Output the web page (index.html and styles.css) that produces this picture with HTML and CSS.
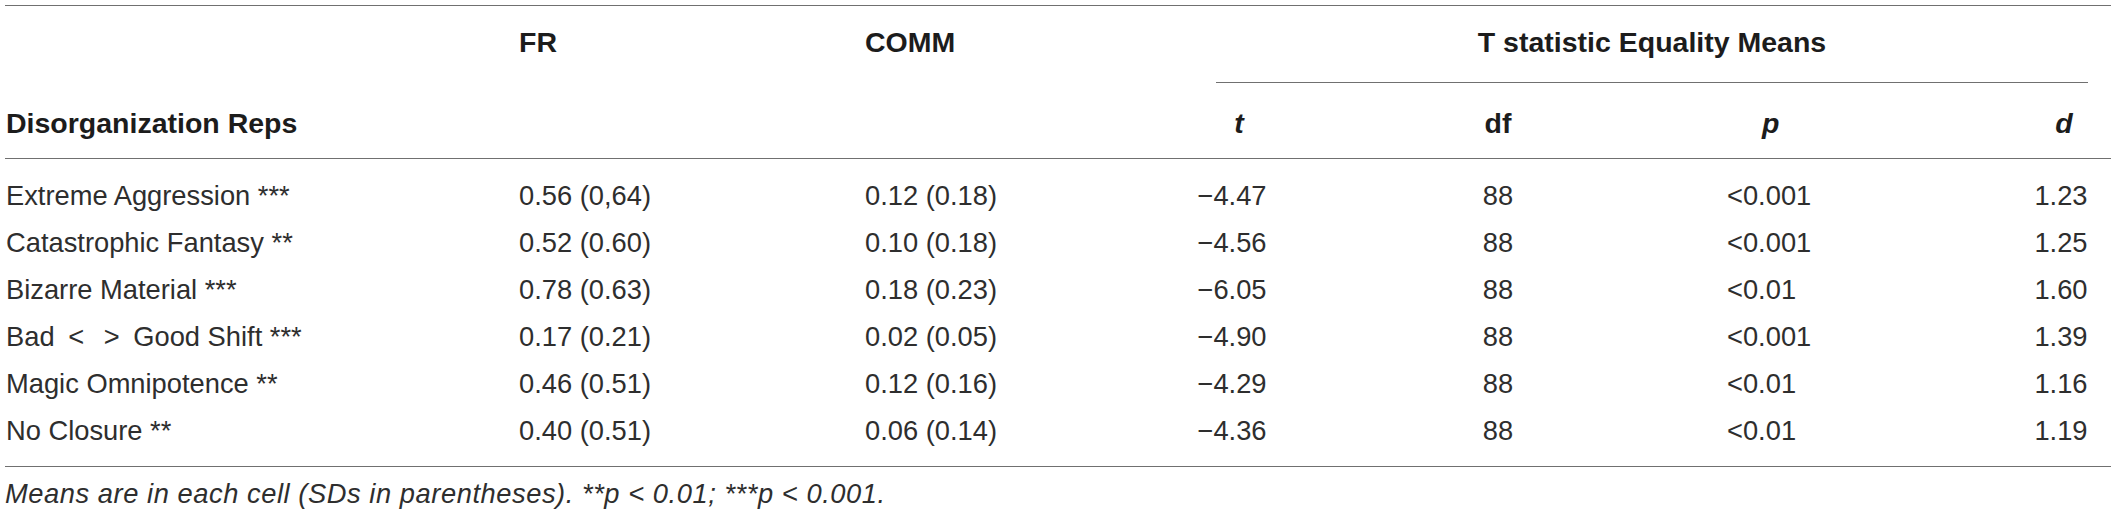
FILE: index.html
```html
<!DOCTYPE html>
<html lang="en">
<head>
<meta charset="utf-8">
<title>Disorganization Reps</title>
<link rel="stylesheet" href="styles.css">
</head>
<body>
<div class="table">
  <div class="head">
    <div class="row hrow1">
      <div class="cell c-label"></div>
      <div class="cell c-fr">FR</div>
      <div class="cell c-comm">COMM</div>
      <div class="cell group">T statistic Equality Means</div>
    </div>
    <div class="row hrow2">
      <div class="cell c-label">Disorganization Reps</div>
      <div class="cell c-fr"></div>
      <div class="cell c-comm"></div>
      <div class="cell c-t c-t-head"><i>t</i></div>
      <div class="cell c-df">df</div>
      <div class="cell c-p-head"><i>p</i></div>
      <div class="cell c-d c-d-head"><i>d</i></div>
    </div>
  </div>
  <div class="body">
    <div class="row drow">
      <div class="cell c-label">Extreme Aggression ***</div>
      <div class="cell c-fr">0.56 (0,64)</div>
      <div class="cell c-comm">0.12 (0.18)</div>
      <div class="cell c-t">−4.47</div>
      <div class="cell c-df">88</div>
      <div class="cell c-p">&lt;0.001</div>
      <div class="cell c-d">1.23</div>
    </div>
    <div class="row drow">
      <div class="cell c-label">Catastrophic Fantasy **</div>
      <div class="cell c-fr">0.52 (0.60)</div>
      <div class="cell c-comm">0.10 (0.18)</div>
      <div class="cell c-t">−4.56</div>
      <div class="cell c-df">88</div>
      <div class="cell c-p">&lt;0.001</div>
      <div class="cell c-d">1.25</div>
    </div>
    <div class="row drow">
      <div class="cell c-label">Bizarre Material ***</div>
      <div class="cell c-fr">0.78 (0.63)</div>
      <div class="cell c-comm">0.18 (0.23)</div>
      <div class="cell c-t">−6.05</div>
      <div class="cell c-df">88</div>
      <div class="cell c-p">&lt;0.01</div>
      <div class="cell c-d">1.60</div>
    </div>
    <div class="row drow">
      <div class="cell c-label">Bad <span class="op">&lt;</span> <span class="op">&gt;</span> Good Shift ***</div>
      <div class="cell c-fr">0.17 (0.21)</div>
      <div class="cell c-comm">0.02 (0.05)</div>
      <div class="cell c-t">−4.90</div>
      <div class="cell c-df">88</div>
      <div class="cell c-p">&lt;0.001</div>
      <div class="cell c-d">1.39</div>
    </div>
    <div class="row drow">
      <div class="cell c-label">Magic Omnipotence **</div>
      <div class="cell c-fr">0.46 (0.51)</div>
      <div class="cell c-comm">0.12 (0.16)</div>
      <div class="cell c-t">−4.29</div>
      <div class="cell c-df">88</div>
      <div class="cell c-p">&lt;0.01</div>
      <div class="cell c-d">1.16</div>
    </div>
    <div class="row drow">
      <div class="cell c-label">No Closure **</div>
      <div class="cell c-fr">0.40 (0.51)</div>
      <div class="cell c-comm">0.06 (0.14)</div>
      <div class="cell c-t">−4.36</div>
      <div class="cell c-df">88</div>
      <div class="cell c-p">&lt;0.01</div>
      <div class="cell c-d">1.19</div>
    </div>
  </div>
  <div class="note">Means are in each cell (SDs in parentheses). **p &lt; 0.01; ***p &lt; 0.001.</div>
</div>
</body>
</html>
```
FILE: styles.css
```css
html, body {
  margin: 0;
  padding: 0;
  background: #ffffff;
}

body {
  font-family: "Liberation Sans", Arial, Helvetica, sans-serif;
  color: #2e2e2e;
}

.table {
  width: 2106px;
  margin-left: 5px;
  padding-top: 5px;
}

.head {
  border-top: 1px solid #707070;
  border-bottom: 1px solid #707070;
}

.row {
  display: grid;
  grid-template-columns: 510px 346px 269px 204px 328px 349px 100px;
}

.cell {
  white-space: pre;
}

.head .cell {
  font-weight: bold;
  font-size: 28.5px;
  line-height: 32px;
  color: #1c1c1c;
}

.hrow1 .cell {
  padding-top: 20px;
}

.hrow1 .group {
  grid-column: 4 / 8;
  margin-left: 86px;
  margin-right: 23px;
  padding-bottom: 24px;
  border-bottom: 1px solid #707070;
  text-align: center;
}

.hrow2 .cell {
  padding-top: 24px;
  padding-bottom: 19px;
}

.body {
  padding-top: 13px;
  padding-bottom: 12px;
  border-bottom: 1px solid #707070;
}

.drow .cell {
  font-size: 27.3px;
  line-height: 47px;
}

.c-label {
  padding-left: 1px;
}

.c-fr,
.c-comm {
  padding-left: 4px;
}

.c-t,
.c-df,
.c-d {
  text-align: center;
}

.hrow2 .c-t-head {
  padding-left: 14px;
}

.hrow2 .c-d-head {
  padding-left: 6px;
}

.c-p {
  padding-left: 65px;
}

.c-p-head {
  padding-left: 100px;
}

.op {
  display: inline-block;
  margin: 0 6px;
}

.note {
  padding-top: 11px;
  font-style: italic;
  font-size: 27.3px;
  line-height: 32px;
  letter-spacing: 0.55px;
  color: #2e2e2e;
}
```
